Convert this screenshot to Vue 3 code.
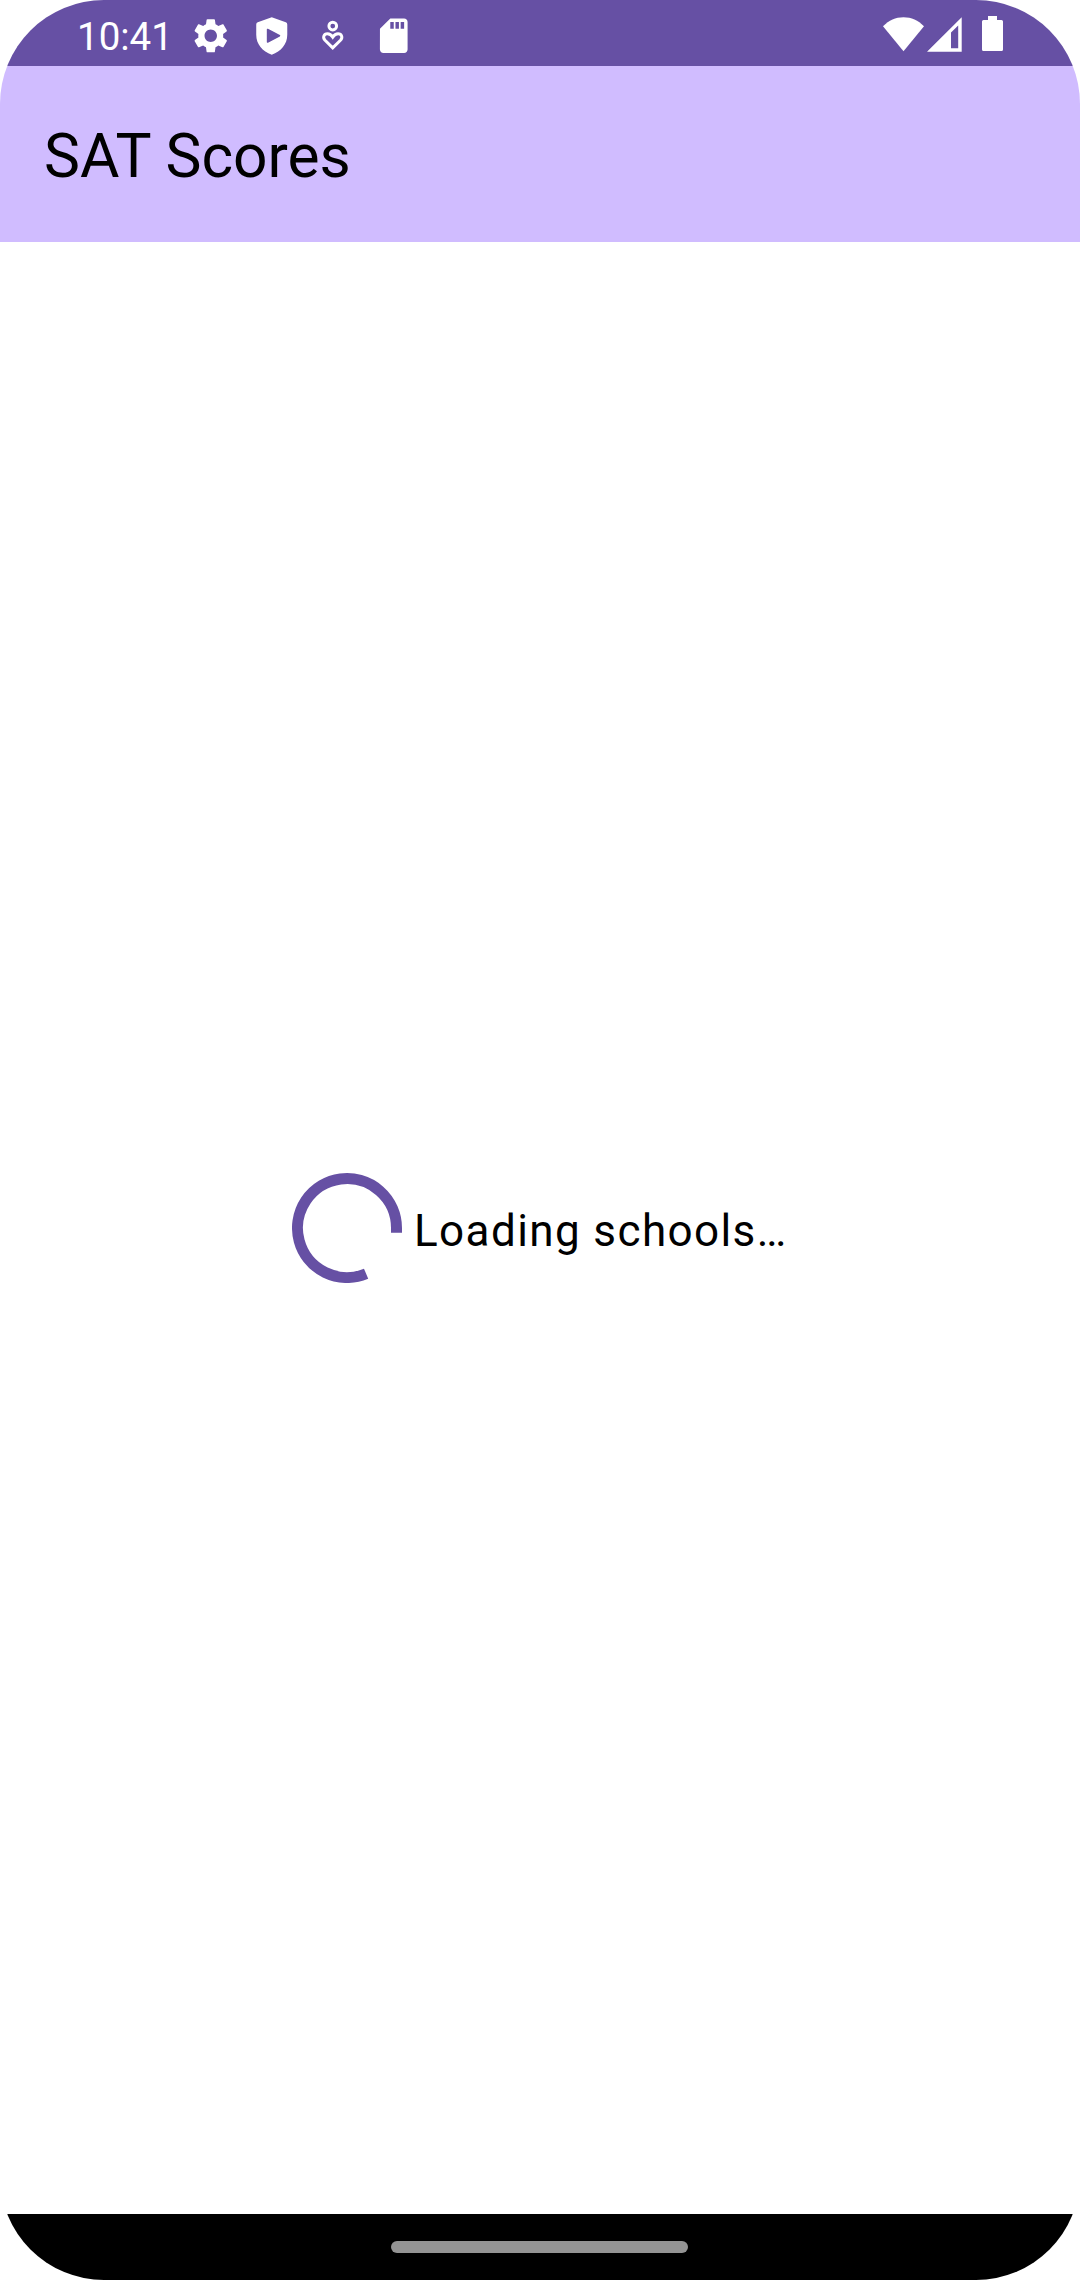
<script setup>
const time = '10:41'
const title = 'SAT Scores'
const message = 'Loading schools…'
</script>

<template>
  <div class="device">
    <header class="status-bar">
      <div class="status-left">
        <span class="time">{{ time }}</span>
        <svg class="icon" viewBox="0 0 24 24">
          <path d="M19.14 12.94c.04-.3.06-.61.06-.94 0-.32-.02-.64-.07-.94l2.03-1.58c.18-.14.23-.41.12-.61l-1.92-3.32c-.12-.22-.37-.29-.59-.22l-2.39.96c-.5-.38-1.03-.7-1.62-.94l-.36-2.54c-.04-.24-.24-.41-.48-.41h-3.84c-.24 0-.43.17-.47.41l-.36 2.54c-.59.24-1.13.57-1.62.94l-2.39-.96c-.22-.08-.47 0-.59.22L2.74 8.87c-.12.21-.08.47.12.61l2.03 1.58c-.05.3-.09.63-.09.94s.02.64.07.94l-2.03 1.58c-.18.14-.23.41-.12.61l1.92 3.32c.12.22.37.29.59.22l2.39-.96c.5.38 1.03.7 1.62.94l.36 2.54c.05.24.24.41.48.41h3.84c.24 0 .44-.17.47-.41l.36-2.54c.59-.24 1.13-.56 1.62-.94l2.39.96c.22.08.47 0 .59-.22l1.92-3.32c.12-.22.07-.47-.12-.61l-2.01-1.58zM12 15.6c-1.98 0-3.6-1.62-3.6-3.6s1.62-3.6 3.6-3.6 3.6 1.62 3.6 3.6-1.62 3.6-3.6 3.6z" />
        </svg>
        <svg class="icon" viewBox="0 0 42 42">
          <path fill-rule="evenodd" d="M21 2.3L35.2 7.4Q36.7 8 36.7 9.6V20C36.7 29.5 30.5 37 21 40.2C11.5 37 5.3 29.5 5.3 20V9.6Q5.3 8 6.8 7.4ZM16 14.6V27.4Q16 28.6 17.2 28L29.2 21.7Q30.2 21 29.2 20.3L17.2 14Q16 13.4 16 14.6Z" />
        </svg>
        <svg class="icon" viewBox="0 0 42 42">
          <circle cx="21" cy="11.2" r="3.9" class="line" />
          <path class="line" d="M21 33.3L13.2 25.6C10.5 22.8 12 19 15.6 19C18 19 19.7 20.4 21 22.4C22.3 20.4 24 19 26.4 19C30 19 31.5 22.8 28.8 25.6Z" />
        </svg>
        <svg class="icon" viewBox="0 0 24 24">
          <path d="M18 2h-8L4.02 8 4 20c0 1.1.9 2 2 2h12c1.1 0 2-.9 2-2V4c0-1.1-.9-2-2-2zm-6 6h-2V4h2v4zm3 0h-2V4h2v4zm3 0h-2V4h2v4z" />
        </svg>
      </div>
      <div class="status-right">
        <svg class="wifi" viewBox="0 0 41 36">
          <path d="M20.5 35.2L0 10.3C6 4 12.5 1.2 20.5 1.2S35 4 41 10.3Z" />
        </svg>
        <svg class="signal" viewBox="0 0 35 36">
          <path fill-rule="evenodd" d="M0 35.7L34.7 1.3V35.7ZM24 16.6V32.2H31.2V9.6Z" />
        </svg>
        <svg class="battery" viewBox="0 0 21 36">
          <path d="M6 0h9v4h4.5Q21 4 21 5.5v28Q21 35 19.5 35h-18Q0 35 0 33.5v-28Q0 4 1.5 4H6Z" />
        </svg>
      </div>
    </header>
    <div class="app-bar">
      <h1 class="title">{{ title }}</h1>
    </div>
    <main class="content">
      <svg class="spinner" viewBox="0 0 110 110">
        <path d="M74.1 100.7A49.5 49.5 0 1 1 104.5 55V59.7" />
      </svg>
      <p class="message">{{ message }}</p>
    </main>
    <footer class="nav-bar">
      <div class="handle"></div>
    </footer>
  </div>
</template>

<style>
html,
body {
  margin: 0;
  background: #fff;
}
</style>

<style scoped>
.device {
  display: flex;
  flex-direction: column;
  width: 1080px;
  height: 2280px;
  overflow: hidden;
  border-radius: 104px;
  background: #fff;
  font-family: Roboto, sans-serif;
}
.status-bar {
  display: flex;
  justify-content: space-between;
  flex: none;
  box-sizing: border-box;
  height: 66px;
  padding: 0 77px;
  background: #6650a4;
  color: #fff;
}
.status-left {
  display: flex;
  align-items: flex-start;
  gap: 19.5px;
}
.time {
  width: 93px;
  padding-top: 14px;
  font-size: 38.5px;
  line-height: 46px;
  white-space: nowrap;
}
.icon {
  width: 41.5px;
  height: 41.5px;
  margin-top: 14.5px;
  fill: #fff;
}
.line {
  fill: none;
  stroke: #fff;
  stroke-width: 3;
}
.status-right {
  display: flex;
  padding-top: 16px;
}
.status-right svg {
  height: 36px;
  fill: #fff;
}
.wifi {
  width: 41px;
  margin-right: 3px;
}
.signal {
  width: 35px;
  margin-right: 20px;
}
.battery {
  width: 21px;
}
.app-bar {
  display: flex;
  align-items: center;
  flex: none;
  height: 176px;
  padding-left: 44px;
  background: #d0bcff;
}
.title {
  margin: 0;
  padding-top: 5px;
  font-size: 60.5px;
  font-weight: 400;
  line-height: 77px;
  color: #000;
}
.content {
  display: flex;
  flex: 1;
  align-items: center;
  justify-content: center;
  gap: 12px;
}
.spinner {
  width: 110px;
  height: 110px;
}
.spinner path {
  fill: none;
  stroke: #6650a4;
  stroke-width: 11;
}
.message {
  width: 374px;
  margin: 0;
  padding-top: 6px;
  font-size: 44px;
  line-height: 66px;
  letter-spacing: 1.4px;
  white-space: nowrap;
  color: #000;
}
.nav-bar {
  display: flex;
  justify-content: center;
  align-items: center;
  flex: none;
  box-sizing: border-box;
  height: 66px;
  padding-right: 1px;
  background: #000;
}
.handle {
  width: 297px;
  height: 12px;
  border-radius: 6px;
  background: #949494;
}
</style>
